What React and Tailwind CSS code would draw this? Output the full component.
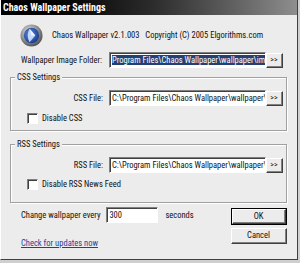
import React from 'react';

function Field({ children, width = 'w-[157px]' }) {
  return (
    <div className={`${width} h-[16px] shrink-0 border-t border-l border-[#808080] border-r border-b border-r-white border-b-white bg-white overflow-hidden`}>
      <div className="h-full border-t border-l border-[#404040] pl-[1px] whitespace-nowrap leading-[13px] overflow-hidden">
        {children}
      </div>
    </div>
  );
}

function Btn({ children, className = '', def = false }) {
  return (
    <div className={`${def ? 'border border-black' : ''} ${className}`}>
      <div className="h-full border-t border-l border-white border-r border-b border-r-[#404040] border-b-[#404040] bg-[#ececec]">
        <div className="h-full border-r border-b border-[#808080] flex items-center justify-center">{children}</div>
      </div>
    </div>
  );
}

function Browse() {
  return (
    <Btn className="w-[17px] h-[15px] mt-[1px] shrink-0 text-[8px] leading-none">&gt;&gt;</Btn>
  );
}

function Check({ label }) {
  return (
    <div className="flex items-center gap-[4px]">
      <div className="w-[11px] h-[11px] border-t border-l border-[#808080] border-r border-b border-r-white border-b-white bg-white">
        <div className="w-full h-full border-t border-l border-[#404040]" />
      </div>
      <span>{label}</span>
    </div>
  );
}

function Group({ title, className = '', children }) {
  return (
    <div className={`relative border border-[#a0a0a0] shadow-[inset_1px_1px_0_#fff,1px_1px_0_#fff] ${className}`}>
      <span className="absolute -top-[7px] left-[4px] px-[2px] bg-[#ececec] leading-[12px]">{title}</span>
      {children}
    </div>
  );
}

function Logo() {
  return (
    <svg width="23" height="23" viewBox="0 0 24 24" className="shrink-0">
      <defs>
        <radialGradient id="ring" cx="40%" cy="35%" r="70%">
          <stop offset="0" stopColor="#e8e8e8" />
          <stop offset="0.6" stopColor="#8c8c8c" />
          <stop offset="1" stopColor="#4a4a4a" />
        </radialGradient>
        <radialGradient id="core" cx="40%" cy="40%" r="60%">
          <stop offset="0" stopColor="#5a8ee0" />
          <stop offset="1" stopColor="#1c3f8f" />
        </radialGradient>
      </defs>
      <circle cx="12" cy="12" r="11.5" fill="url(#ring)" />
      <circle cx="12" cy="12" r="8" fill="url(#core)" />
      <path d="M10 5 L16 12 L10 19 Q6 12 10 5 Z" fill="#cfe0ff" opacity="0.9" />
      <path d="M10 5 L16 12 L12 12 Z" fill="#ffffff" opacity="0.8" />
    </svg>
  );
}

export default function App() {
  return (
    <div className="w-[300px] h-[263px] bg-[#cfcfcf] overflow-hidden text-[8.5px] text-[#111] font-['Roboto_Condensed',monospace]">
      <div className="w-[298px] h-[260px] bg-[#ececec] border-l border-white border-r border-b border-r-[#404040] border-b-[#404040] flex flex-col">
        <div className="h-[15px] bg-gradient-to-r from-black via-[#2a2a2a] to-[#8e8e8e] text-white font-bold text-[10px] leading-[15px] pl-[2px]">
          Chaos Wallpaper Settings
        </div>

        <div className="flex items-center h-[23px] mt-[9px] pl-[19px]">
          <Logo />
          <span className="ml-[9px] whitespace-nowrap">Chaos Wallpaper v2.1.003&nbsp;&nbsp; Copyright (C) 2005 Elgorithms.com</span>
        </div>

        <div className="flex items-start mt-[5px] h-[16px]">
          <span className="w-[108px] shrink-0 pl-[20px] leading-[16px] whitespace-nowrap">Wallpaper Image Folder:</span>
          <Field>
            <span className="bg-[#243f72] text-white">Program Files\Chaos Wallpaper\wallpaper\ima</span>
          </Field>
          <Browse />
        </div>

        <Group title="CSS Settings" className="ml-[9px] mr-[10px] mt-[9px] h-[54px]">
          <div className="flex items-start mt-[12px] h-[16px]">
            <span className="w-[98px] shrink-0 text-right pr-[6px] leading-[16px]">CSS File:</span>
            <Field>C:\Program Files\Chaos Wallpaper\wallpaper\</Field>
            <Browse />
          </div>
          <div className="mt-[6px] pl-[16px]">
            <Check label="Disable CSS" />
          </div>
        </Group>

        <Group title="RSS Settings" className="ml-[9px] mr-[10px] mt-[13px] h-[59px]">
          <div className="flex items-start mt-[12px] h-[16px]">
            <span className="w-[98px] shrink-0 text-right pr-[6px] leading-[16px]">RSS File:</span>
            <Field>C:\Program Files\Chaos Wallpaper\wallpaper\</Field>
            <Browse />
          </div>
          <div className="mt-[5px] pl-[16px]">
            <Check label="Disable RSS News Feed" />
          </div>
        </Group>

        <div className="flex mt-[4px]">
          <div className="flex-1 pl-[20px]">
            <div className="flex items-center h-[16px]">
              <span className="whitespace-nowrap">Change wallpaper every</span>
              <div className="ml-[6px]">
                <Field width="w-[52px]">300</Field>
              </div>
              <span className="ml-[7px]">seconds</span>
            </div>
            <div className="mt-[13px] text-[#1f3f9f] underline leading-[14px]">Check for updates now</div>
          </div>
          <div className="w-[56px] mr-[10px] mt-[1px] flex flex-col gap-[3px]">
            <Btn def className="h-[17px]">OK</Btn>
            <Btn className="h-[16px]">Cancel</Btn>
          </div>
        </div>
      </div>
    </div>
  );
}
